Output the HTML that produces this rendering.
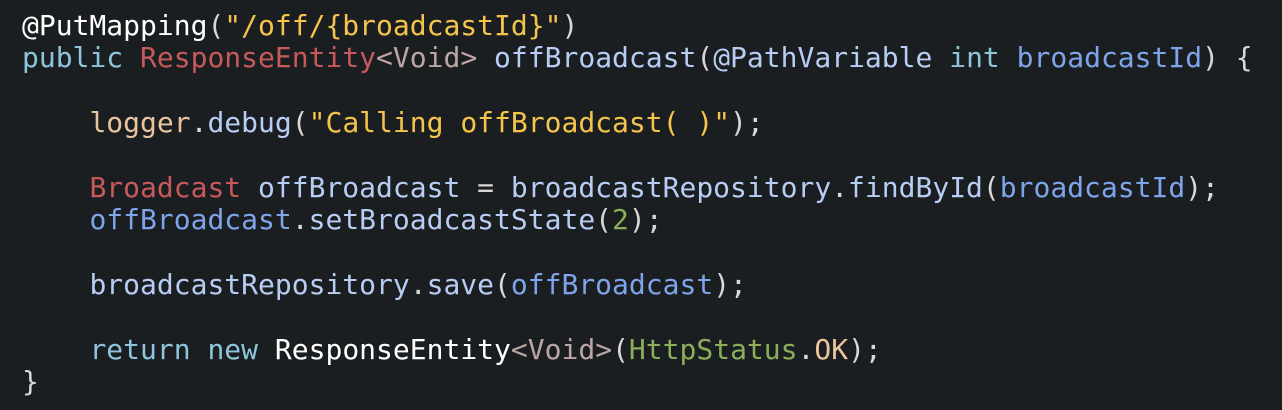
<!DOCTYPE html>
<html><head><style>
html,body{margin:0;padding:0;background:#1b1e21;width:1282px;height:410px;overflow:hidden}
pre{margin:0;position:absolute;left:22px;top:10px;font-family:"DejaVu Sans Mono","Liberation Mono",monospace;font-size:28px;line-height:32.4px;color:#ffffff;white-space:pre}
.s{color:#f5c54b}.k{color:#8ec5dc}.t{color:#c7595b}.v{color:#bba5a5}.m{color:#b8cdf3}.p{color:#7ea4ea}.l{color:#e9c49c}.g{color:#8bae5b}.w{color:#d8d8d8}
</style></head><body>
<pre>@PutMapping<span class="w">(</span><span class="s">"/off/{broadcastId}"</span><span class="w">)</span>
<span class="k">public</span> <span class="t">ResponseEntity</span><span class="v">&lt;Void&gt;</span> <span class="m">offBroadcast</span><span class="w">(</span><span class="m">@PathVariable</span> <span class="k">int</span> <span class="p">broadcastId</span><span class="w">) {</span>

    <span class="l">logger</span><span class="w">.</span><span class="m">debug</span><span class="w">(</span><span class="s">"Calling offBroadcast( )"</span><span class="w">);</span>

    <span class="t">Broadcast</span> <span class="m">offBroadcast</span> <span class="w">=</span> <span class="m">broadcastRepository</span><span class="w">.</span><span class="m">findById</span><span class="w">(</span><span class="p">broadcastId</span><span class="w">);</span>
    <span class="p">offBroadcast</span><span class="w">.</span><span class="m">setBroadcastState</span><span class="w">(</span><span class="g">2</span><span class="w">);</span>

    <span class="m">broadcastRepository</span><span class="w">.</span><span class="m">save</span><span class="w">(</span><span class="p">offBroadcast</span><span class="w">);</span>

    <span class="k">return</span> <span class="k">new</span> ResponseEntity<span class="v">&lt;Void&gt;</span><span class="w">(</span><span class="g">HttpStatus</span><span class="w">.</span><span class="l">OK</span><span class="w">);</span>
<span class="w">}</span></pre>
</body></html>
